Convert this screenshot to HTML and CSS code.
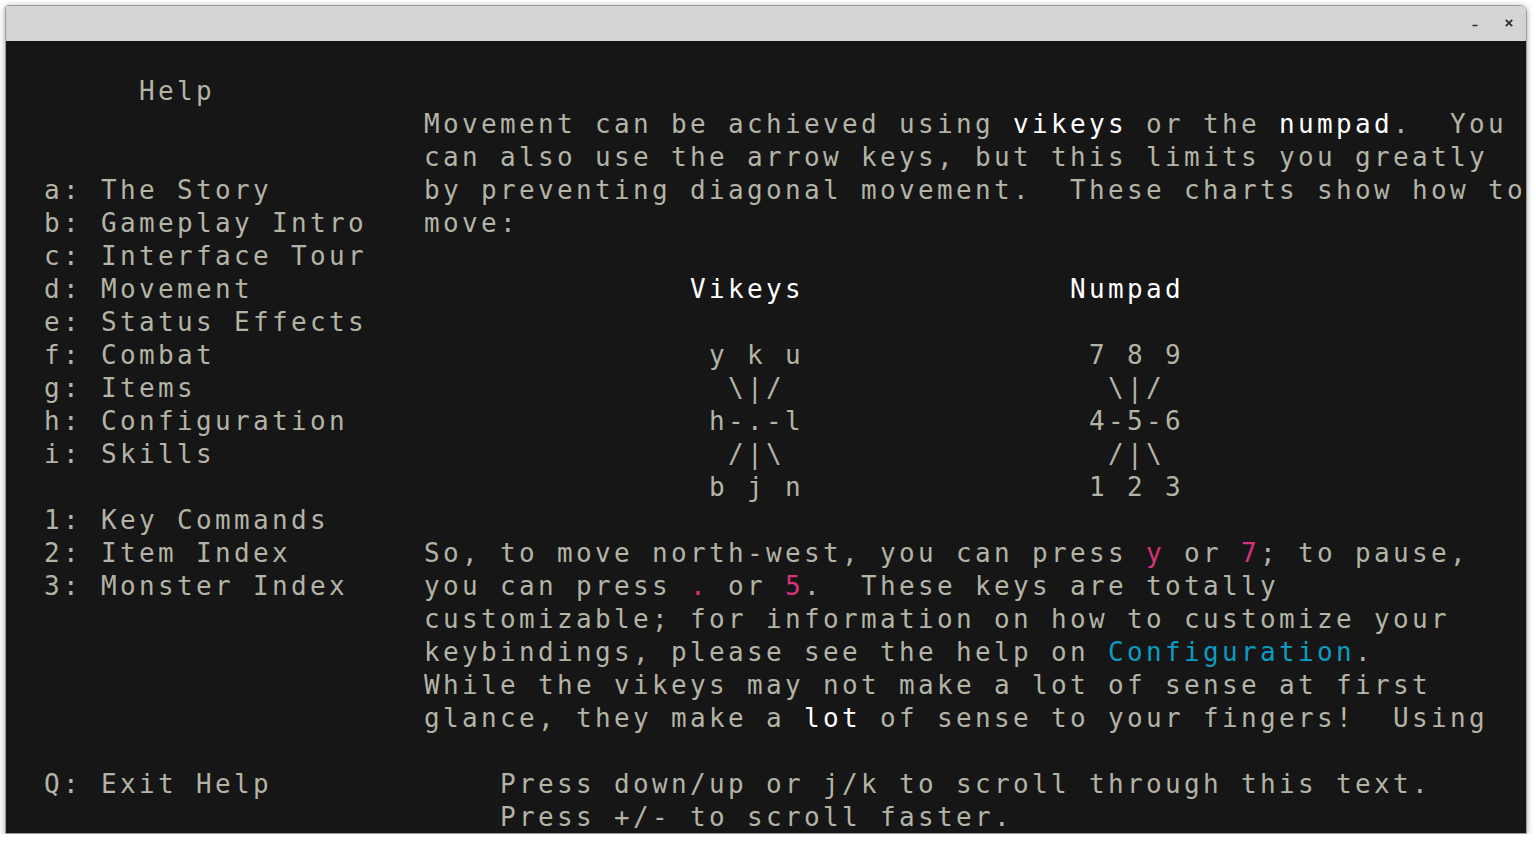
FILE: index.html
```html
<!DOCTYPE html>
<html>
<head>
<meta charset="utf-8">
<title>Help</title>
<link rel="stylesheet" href="styles.css">
</head>
<body>
<div class="window">
  <div class="titlebar">
    <button class="tb-btn" aria-label="Minimize">
      <svg width="10" height="10" viewBox="0 0 10 10"><path d="M2.5 7.5h5" stroke="#2e2e2e" stroke-width="1.6"/></svg>
    </button>
    <button class="tb-btn" aria-label="Close">
      <svg width="10" height="10" viewBox="0 0 10 10"><path d="M1.8 1.8l6.4 6.4M8.2 1.8l-6.4 6.4" stroke="#2e2e2e" stroke-width="1.8"/></svg>
    </button>
  </div>
  <div class="term">
    <div class="main">
      <nav class="nav">
        <div class="line"></div>
        <div class="line title">Help</div>
        <div class="line"></div>
        <div class="line"></div>
        <div class="line">a: The Story</div>
        <div class="line">b: Gameplay Intro</div>
        <div class="line">c: Interface Tour</div>
        <div class="line">d: Movement</div>
        <div class="line">e: Status Effects</div>
        <div class="line">f: Combat</div>
        <div class="line">g: Items</div>
        <div class="line">h: Configuration</div>
        <div class="line">i: Skills</div>
        <div class="line"></div>
        <div class="line">1: Key Commands</div>
        <div class="line">2: Item Index</div>
        <div class="line">3: Monster Index</div>
      </nav>
      <section class="page">
        <div class="line"></div>
        <div class="line"></div>
        <div class="line">Movement can be achieved using <b class="hi">vikeys</b> or the <b class="hi">numpad</b>.  You</div>
        <div class="line">can also use the arrow keys, but this limits you greatly</div>
        <div class="line">by preventing diagonal movement.  These charts show how to</div>
        <div class="line">move:</div>
        <div class="line"></div>
        <div class="charts">
          <div class="chart">
            <div class="line head hi">Vikeys</div>
            <div class="line"></div>
            <div class="line"> y k u</div>
            <div class="line">  \|/</div>
            <div class="line"> h-.-l</div>
            <div class="line">  /|\</div>
            <div class="line"> b j n</div>
          </div>
          <div class="chart">
            <div class="line head hi">Numpad</div>
            <div class="line"></div>
            <div class="line"> 7 8 9</div>
            <div class="line">  \|/</div>
            <div class="line"> 4-5-6</div>
            <div class="line">  /|\</div>
            <div class="line"> 1 2 3</div>
          </div>
        </div>
        <div class="line"></div>
        <div class="line">So, to move north-west, you can press <span class="key">y</span> or <span class="key">7</span>; to pause,</div>
        <div class="line">you can press <span class="key">.</span> or <span class="key">5</span>.  These keys are totally</div>
        <div class="line">customizable; for information on how to customize your</div>
        <div class="line">keybindings, please see the help on <span class="link">Configuration</span>.</div>
        <div class="line">While the vikeys may not make a lot of sense at first</div>
        <div class="line">glance, they make a <b class="hi">lot</b> of sense to your fingers!  Using</div>
      </section>
    </div>
    <footer class="footer">
      <div class="exit">
        <div class="line">Q: Exit Help</div>
      </div>
      <div class="hints">
        <div class="line">Press down/up or j/k to scroll through this text.</div>
        <div class="line">Press +/- to scroll faster.</div>
      </div>
    </footer>
  </div>
</div>
</body>
</html>
```
FILE: styles.css
```css
html, body {
  margin: 0;
  padding: 0;
  background: #ffffff;
}
body {
  padding: 5px 0 0 5px;
}
.window {
  width: 1520px;
  border: 1px solid #9a9a9a;
  border-radius: 3px 7px 0 0;
  overflow: hidden;
  box-shadow: 0 1px 6px rgba(0, 0, 0, 0.35);
}
.titlebar {
  height: 35px;
  background: #d4d4d4;
  display: flex;
  justify-content: flex-end;
  align-items: center;
  gap: 22px;
  padding-right: 11px;
  box-sizing: border-box;
}
.tb-btn {
  width: 12px;
  height: 12px;
  padding: 0;
  border: 0;
  background: transparent;
  display: flex;
  align-items: center;
  justify-content: center;
  margin-top: -2px;
}
.term {
  background: #161616;
  height: 792px;
  box-sizing: border-box;
  padding-top: 1px;
  color: #b3b3a6;
  font-family: "DejaVu Sans Mono", monospace;
  font-size: 26px;
  letter-spacing: 3.347px;
  display: flex;
  flex-direction: column;
}
.line {
  height: 33px;
  line-height: 33px;
  white-space: pre;
}
.main {
  display: flex;
  height: 726px;
  flex: none;
}
.nav {
  width: 380px;
  padding-left: 38px;
}
.nav .title {
  padding-left: 95px;
}
.page {
  flex: 1;
}
.charts {
  display: flex;
  padding-left: 266px;
  gap: 266px;
}
.chart {
  width: 114px;
}
b {
  font-weight: normal;
}
.hi {
  color: #ffffff;
}
.key {
  color: #d8317b;
}
.link {
  color: #0a9cc3;
}
.footer {
  display: flex;
}
.exit {
  width: 456px;
  padding-left: 38px;
}
.hints {
  flex: 1;
}
```
